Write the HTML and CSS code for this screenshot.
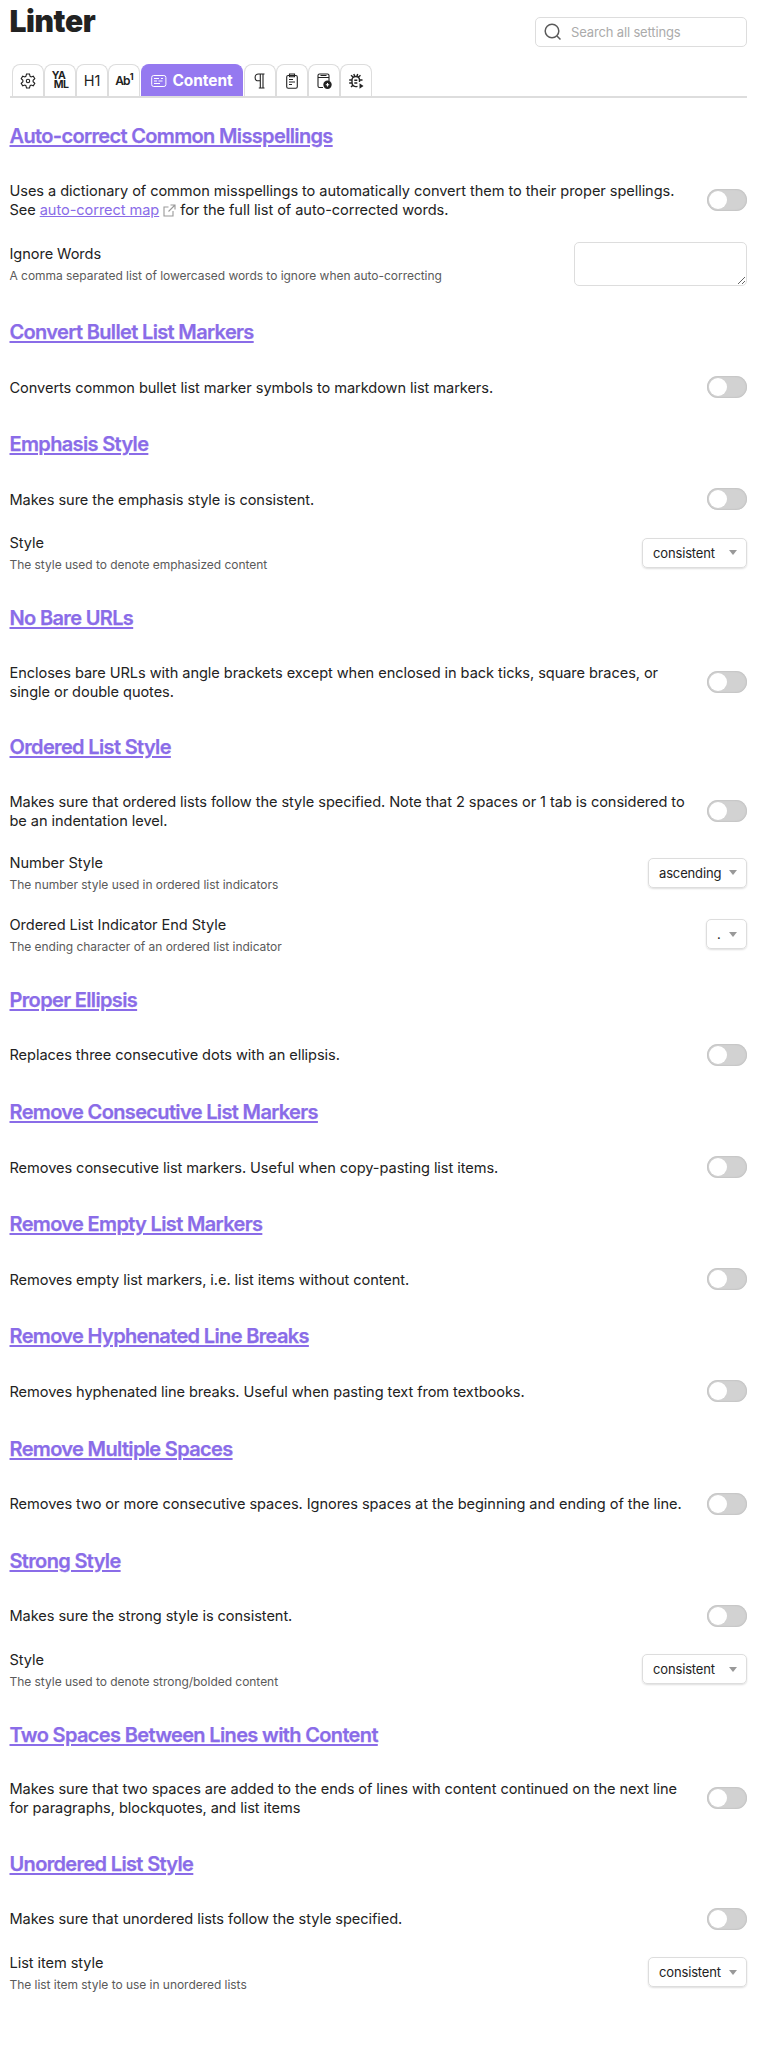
FILE: index.html
```html
<!DOCTYPE html>
<html lang="en"><head><meta charset="utf-8"><title>Linter</title><link rel="stylesheet" href="styles.css"></head>
<body>
<main class="settings">
<header class="top"><h1>Linter</h1>
<label class="search"><svg width="18" height="18" viewBox="0 0 18 18"><circle cx="8" cy="8" r="6.8"/><path d="M13 13l3.5 3.5"/></svg><span>Search all settings</span></label></header>
<nav class="tabs">
<div class="tab"><svg width="16" height="16" viewBox="0 0 16 16"><path d="M6.500 1h3l.6 2.300 1 .6 2.200-.7 1.500 2.500-1.700 1.600v1.400l1.700 1.600-1.500 2.500-2.200-.7-1 .6-.6 2.300h-3l-.6-2.300-1-.6-2.200.7-1.500-2.500 1.700-1.600V7.300L1.200 5.700l1.500-2.500 2.200.7 1-.6z"/><circle cx="8" cy="8" r="1.700"/></svg></div>
<div class="tab"><span class="yaml"><b>YA</b><b class="ml">ML</b></span></div>
<div class="tab"><span class="h1">H1</span></div>
<div class="tab"><span class="ab">Ab<sup>1</sup></span></div>
<div class="tab active"><svg width="16" height="14" viewBox="0 0 16 14"><rect x=".7" y="1.500" width="14.200" height="11" rx="2"/><path d="M3 4.500h5M10 4.500h2M3 7h3M7.500 7h4M3 9.500h6"/></svg><span>Content</span></div>
<div class="tab"><svg width="16" height="16" viewBox="0 0 16 16"><path d="M12.500 1H6.500a3.300 3.300 0 0 0 0 6.800h1.800M8.300 1v14M11 1v14M6.800 15h5.700"/></svg></div>
<div class="tab"><svg width="16" height="16" viewBox="0 0 16 16"><rect x="2.700" y="2.500" width="10.600" height="12.800" rx="1.500"/><path d="M5.500 1h5v2.700h-5zM5 6.500h4M5 9h6M5 11.500h3"/></svg></div>
<div class="tab"><svg width="16" height="16" viewBox="0 0 16 16"><path d="M7 14.500H3.500A1.500 1.500 0 0 1 2 13V2.500A1.500 1.500 0 0 1 3.500 1h8A1.500 1.500 0 0 1 13 2.500V8M2.500 4.500h10M4.500 2.500h6"/><circle class="fill" cx="11.500" cy="11.700" r="4.200"/><path class="light" d="M11.500 10v3.400M9.800 11.700h3.400"/></svg></div>
<div class="tab"><svg width="16" height="16" viewBox="0 0 16 16"><path class="heavy" d="M9.500 13.300c-3.200 1-5.500-.8-5.500-3.800V7c0-4.700 7.500-4.700 7.500 0v2M5 4L3 2.200M10.500 4l2-1.800M4 7H1.200M11.500 7h3M4 10H1.200M4.800 12.300L3 14M6.300 7.300h3M6.300 10h3M5.800 1l.8 2M9.700 1L9 3"/><path class="fill" d="M11.500 10.300l4 2.700-4 2.700z"/></svg></div>
</nav>

<section><h2>Auto-correct Common Misspellings</h2>
<div class="item two"><p>Uses a dictionary of common misspellings to automatically convert them to their proper spellings.<br>See <a>auto-correct map</a><svg class="ext" width="13" height="13" viewBox="0 0 13 13"><path d="M5.500 3H1v9h9V7M7.500 1H12v4.500M12 1L5.500 7.500"/></svg> for the full list of auto-corrected words.</p><i class="toggle"></i></div>
<div class="option area"><div><h3>Ignore Words</h3><small>A comma separated list of lowercased words to ignore when auto-correcting</small></div><textarea></textarea></div></section>
<section><h2>Convert Bullet List Markers</h2>
<div class="item"><p>Converts common bullet list marker symbols to markdown list markers.</p><i class="toggle"></i></div></section>
<section><h2>Emphasis Style</h2>
<div class="item"><p>Makes sure the emphasis style is consistent.</p><i class="toggle"></i></div>
<div class="option"><div><h3>Style</h3><small>The style used to denote emphasized content</small></div><span class="select wide">consistent</span></div></section>
<section><h2>No Bare URLs</h2>
<div class="item two"><p>Encloses bare URLs with angle brackets except when enclosed in back ticks, square braces, or<br>single or double quotes.</p><i class="toggle"></i></div></section>
<section><h2>Ordered List Style</h2>
<div class="item two"><p>Makes sure that ordered lists follow the style specified. Note that 2 spaces or 1 tab is considered to<br>be an indentation level.</p><i class="toggle"></i></div>
<div class="option"><div><h3>Number Style</h3><small>The number style used in ordered list indicators</small></div><span class="select">ascending</span></div>
<div class="option"><div><h3>Ordered List Indicator End Style</h3><small>The ending character of an ordered list indicator</small></div><span class="select tiny">.</span></div></section>
<section><h2>Proper Ellipsis</h2>
<div class="item"><p>Replaces three consecutive dots with an ellipsis.</p><i class="toggle"></i></div></section>
<section><h2>Remove Consecutive List Markers</h2>
<div class="item"><p>Removes consecutive list markers. Useful when copy-pasting list items.</p><i class="toggle"></i></div></section>
<section><h2>Remove Empty List Markers</h2>
<div class="item"><p>Removes empty list markers, i.e. list items without content.</p><i class="toggle"></i></div></section>
<section><h2>Remove Hyphenated Line Breaks</h2>
<div class="item"><p>Removes hyphenated line breaks. Useful when pasting text from textbooks.</p><i class="toggle"></i></div></section>
<section><h2>Remove Multiple Spaces</h2>
<div class="item"><p>Removes two or more consecutive spaces. Ignores spaces at the beginning and ending of the line.</p><i class="toggle"></i></div></section>
<section><h2>Strong Style</h2>
<div class="item"><p>Makes sure the strong style is consistent.</p><i class="toggle"></i></div>
<div class="option"><div><h3>Style</h3><small>The style used to denote strong/bolded content</small></div><span class="select wide">consistent</span></div></section>
<section><h2>Two Spaces Between Lines with Content</h2>
<div class="item two"><p>Makes sure that two spaces are added to the ends of lines with content continued on the next line<br>for paragraphs, blockquotes, and list items</p><i class="toggle"></i></div></section>
<section><h2>Unordered List Style</h2>
<div class="item"><p>Makes sure that unordered lists follow the style specified.</p><i class="toggle"></i></div>
<div class="option"><div><h3>List item style</h3><small>The list item style to use in unordered lists</small></div><span class="select">consistent</span></div></section>
</main>
</body></html>
```
FILE: styles.css
```css
* { box-sizing: border-box; }
body { margin: 0; background: #fff; color: #222; font-family: Inter, "Liberation Sans", sans-serif; font-size: 14.6px; letter-spacing: -.07px; }
.settings { width: 747px; padding-left: 9.500px; }
h1, h2, h3, p { margin: 0; }
.top { display: flex; justify-content: space-between; height: 64px; }
h1 { font-size: 30px; line-height: 43px; font-weight: 900; letter-spacing: -.4px; }
.search { display: flex; align-items: center; gap: 9px; width: 212px; height: 30px; margin-top: 17px; padding-left: 8px; border: 1px solid #ddd; border-radius: 5px; color: #ababab; font-size: 13px; letter-spacing: -.15px; }
svg { fill: none; stroke: #222; stroke-width: 1.1; flex: none; }
.search svg { stroke: #5a5a5a; stroke-width: 1.5; }
.tabs { display: flex; height: 34px; margin-bottom: 3.500px; padding-left: 2.500px; border-bottom: 2px solid #ddd; }
.tab { display: flex; align-items: center; justify-content: center; width: 32px; height: 32px; border: 1px solid #ddd; border-bottom: 0; border-radius: 8px 8px 0 0; }
.tab .fill { fill: #222; stroke: none; }
.tab .light { stroke: #fff; }
.tab .heavy { stroke-width: 1.4; }
.active { width: 102px; margin: 0 1px; gap: 5px; background: #9579f0; border-color: #9579f0; color: #fff; font-size: 15.5px; font-weight: 700; }
.active svg { stroke: #fff; stroke-width: 1; }
.yaml { display: flex; flex-direction: column; font-size: 10.500px; line-height: 8.500px; letter-spacing: -.7px; }
.yaml .ml { padding-left: 2px; }
.h1 { font-size: 14.500px; }
.ab { font-size: 12px; font-weight: 600; letter-spacing: -.8px; }
.ab sup { font-size: 9px; line-height: 0; font-weight: 700; }
h2 { height: 61.500px; padding-top: 21.500px; color: #8a6ce8; font-size: 20px; line-height: 26px; font-weight: 600; letter-spacing: -.65px; text-decoration: underline; text-decoration-thickness: 2px; text-underline-offset: 2px; white-space: nowrap; -webkit-text-stroke: .25px #8a6ce8; }
.item { display: flex; align-items: center; justify-content: space-between; height: 50.700px; padding-top: 5.500px; }
.item.two { height: 67.500px; }
p { padding-top: 2px; line-height: 19px; white-space: nowrap; }
p a { color: #8a6ce8; text-decoration: underline; }
.ext { stroke: #999; margin: 0 0 0 4px; vertical-align: -2px; }
.toggle { flex: none; width: 40px; height: 22px; padding: 2px; border-radius: 11px; background: #d2d2d2; box-shadow: inset 0 0 2px #aaa; }
.toggle::before { content: ""; display: block; width: 18px; height: 18px; border-radius: 50%; background: #fff; }
.option { display: flex; align-items: center; justify-content: space-between; height: 61.800px; }
.option > div { padding-top: 1.500px; }
.option.area { height: 67px; }
h3 { font-size: 14.600px; line-height: 20px; font-weight: 400; }
small { display: block; margin-top: 3px; color: #5a5a5a; font-size: 12px; line-height: 18px; letter-spacing: -.035px; white-space: nowrap; }
textarea { width: 173px; height: 44px; margin: 0; border: 1px solid #ddd; border-radius: 5px; }
.select { display: flex; align-items: center; justify-content: space-between; width: 99px; height: 30px; padding: 0 9px 0 10px; border: 1px solid #ddd; border-radius: 5px; box-shadow: 0 1px 2px #0002; font-size: 13px; letter-spacing: -.15px; }
.select::after { content: ""; border: 4.500px solid transparent; border-top: 5px solid #999; border-bottom: 0; }
.select.wide { width: 105px; }
.select.tiny { width: 41px; }
```
